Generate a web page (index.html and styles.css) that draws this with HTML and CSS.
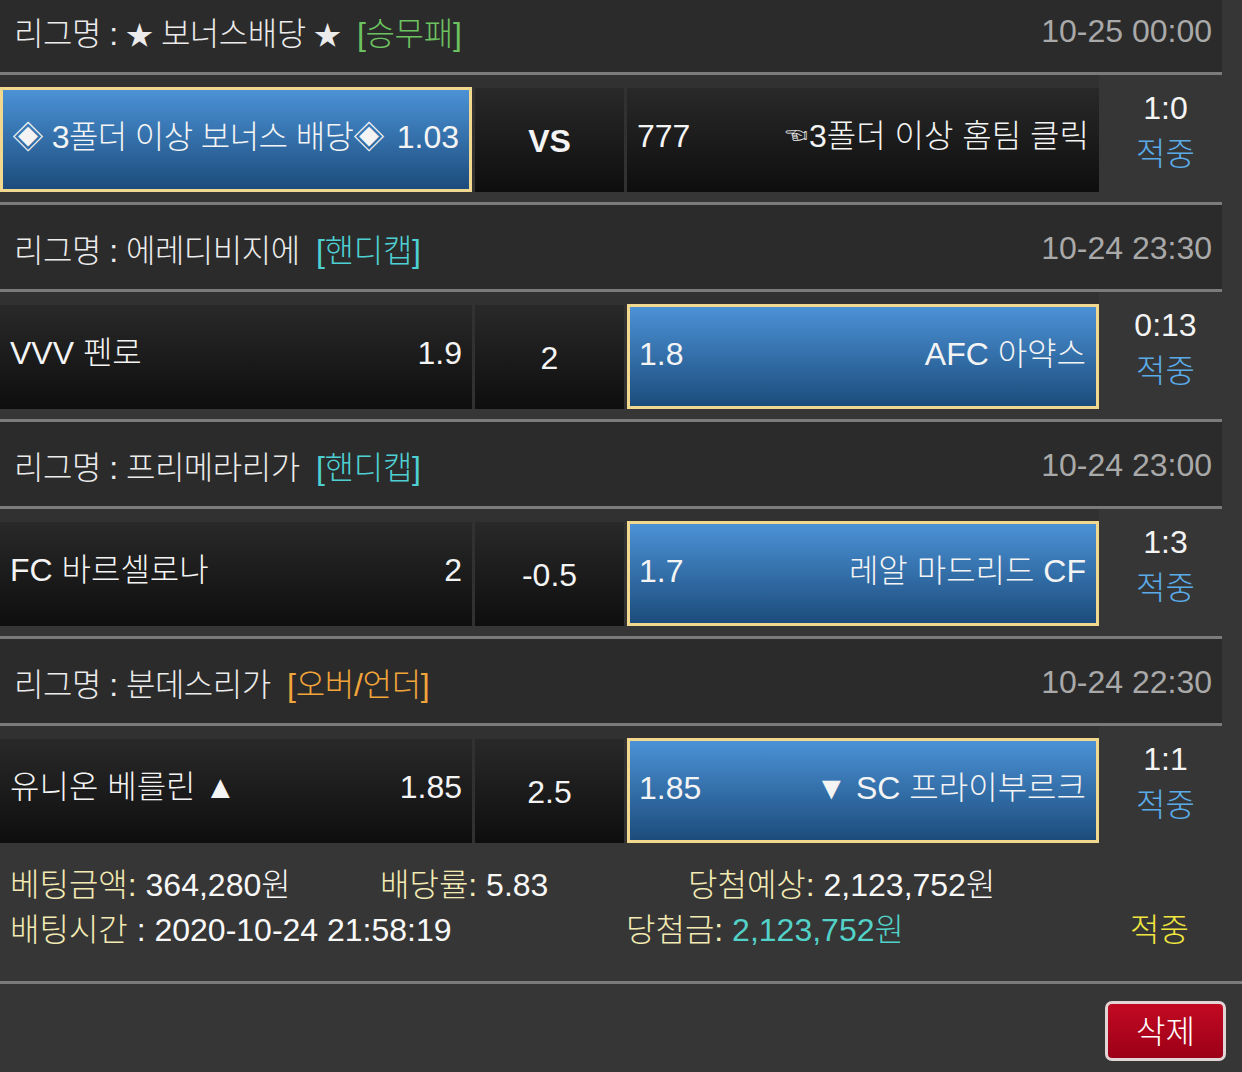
FILE: index.html
```html
<!DOCTYPE html>
<html lang="ko">
<head>
<meta charset="utf-8">
<title>Bet slip</title>
<link rel="stylesheet" href="styles.css">
</head>
<body>
<div class="page">
  <div class="list">
    <section class="game">
      <div class="head">
        <div class="league">리그명 : <span class="star">★</span> 보너스배당 <span class="star">★</span> <span class="tag tag-green">[승무패]</span></div>
        <div class="date">10-25 00:00</div>
      </div>
      <div class="match">
        <div class="cells">
          <div class="cell side selected"><div class="pick"><span class="tight">◈ 3폴더 이상 보너스 배당◈</span><span>1.03</span></div></div>
          <div class="cell mid vs">VS</div>
          <div class="cell side"><div class="pick"><span>777</span><span><span class="hand">☜</span>3폴더 이상 홈팀 클릭</span></div></div>
        </div>
        <div class="score"><div>1:0</div><div class="hit">적중</div></div>
      </div>
    </section>

    <section class="game">
      <div class="head">
        <div class="league">리그명 : 에레디비지에 <span class="tag tag-cyan">[핸디캡]</span></div>
        <div class="date">10-24 23:30</div>
      </div>
      <div class="match">
        <div class="cells">
          <div class="cell side"><div class="pick"><span>VVV 펜로</span><span>1.9</span></div></div>
          <div class="cell mid">2</div>
          <div class="cell side selected"><div class="pick"><span>1.8</span><span>AFC 아약스</span></div></div>
        </div>
        <div class="score"><div>0:13</div><div class="hit">적중</div></div>
      </div>
    </section>

    <section class="game">
      <div class="head">
        <div class="league">리그명 : 프리메라리가 <span class="tag tag-cyan">[핸디캡]</span></div>
        <div class="date">10-24 23:00</div>
      </div>
      <div class="match">
        <div class="cells">
          <div class="cell side"><div class="pick"><span>FC 바르셀로나</span><span>2</span></div></div>
          <div class="cell mid">-0.5</div>
          <div class="cell side selected"><div class="pick"><span>1.7</span><span>레알 마드리드 CF</span></div></div>
        </div>
        <div class="score"><div>1:3</div><div class="hit">적중</div></div>
      </div>
    </section>

    <section class="game">
      <div class="head">
        <div class="league">리그명 : 분데스리가 <span class="tag tag-orange">[오버/언더]</span></div>
        <div class="date">10-24 22:30</div>
      </div>
      <div class="match">
        <div class="cells">
          <div class="cell side"><div class="pick"><span>유니온 베를린 ▲</span><span>1.85</span></div></div>
          <div class="cell mid">2.5</div>
          <div class="cell side selected"><div class="pick"><span>1.85</span><span>▼ SC 프라이부르크</span></div></div>
        </div>
        <div class="score"><div>1:1</div><div class="hit">적중</div></div>
      </div>
    </section>
  </div>

  <div class="summary">
    <div class="line line-1">
      <div><span class="label">베팅금액:</span> 364,280원</div>
      <div><span class="label">배당률:</span> 5.83</div>
      <div><span class="label">당첨예상:</span> 2,123,752원</div>
    </div>
    <div class="line line-2">
      <div><span class="label">배팅시간</span> : 2020-10-24 21:58:19</div>
      <div><span class="label">당첨금:</span> <span class="won">2,123,752원</span></div>
      <div class="result">적중</div>
    </div>
  </div>

  <div class="actions">
    <button class="delete" type="button">삭제</button>
  </div>
</div>
</body>
</html>
```

FILE: styles.css
```css
html, body {
  margin: 0;
  padding: 0;
  background: #363636;
}

body {
  width: 1242px;
  height: 1072px;
  overflow: hidden;
  font-family: "Liberation Sans", "Noto Sans CJK KR", sans-serif;
  font-size: 32px;
  font-weight: 300;
  color: #f2f2f2;
}

.list {
  margin-top: -15px;
}

.game + .game {
  margin-top: 10px;
}

.head {
  width: 1222px;
  box-sizing: border-box;
  height: 90px;
  background: #2b2b2b;
  border-top: 3px solid #7b7b7b;
  border-bottom: 3px solid #7b7b7b;
  display: flex;
  align-items: center;
  justify-content: space-between;
  padding: 2px 10px 0 14px;
  color: #ececec;
}

.league {
  letter-spacing: -0.5px;
}

.star {
  font-size: 27px;
}

.tag {
  margin-left: 8px;
  letter-spacing: -0.3px;
}

.tag-green { color: #6cc160; }
.tag-cyan { color: #4ecfd2; }
.tag-orange { color: #f1a43a; }

.date {
  color: #a9a9a9;
}

.match {
  display: flex;
  height: 117px;
}

.cells {
  display: grid;
  grid-template-columns: 472px 149px 472px;
  column-gap: 3px;
  padding-top: 13px;
  background: #313131;
}

.cell {
  background: linear-gradient(#292929, #0e0e0e);
  display: flex;
  align-items: center;
  box-sizing: border-box;
  color: #f4f4f4;
}

.side {
  padding: 0 10px 8px 10px;
}

.pick {
  flex: 1;
  display: flex;
  align-items: baseline;
  justify-content: space-between;
  line-height: 40px;
}

.selected {
  background: linear-gradient(#4b92d6, #1c4c7c);
  border: 3px solid #f2d78e;
  margin-top: -1px;
  padding: 0 10px 6px 9px;
}

.tight {
  letter-spacing: -0.6px;
}

.mid {
  justify-content: center;
  padding-top: 2px;
}

.vs {
  font-weight: bold;
}

.hand {
  font-size: 26px;
  font-family: "DejaVu Sans", sans-serif;
  vertical-align: 2px;
}

.score {
  flex: 1;
  padding: 10px 10px 0 0;
  text-align: center;
  line-height: 46px;
  color: #f4f4f4;
}

.hit {
  color: #5aabe7;
}

.summary {
  padding: 20px 0 28px 10px;
  border-bottom: 3px solid #7b7b7b;
  line-height: 45px;
  color: #f8f8f8;
}

.line {
  display: grid;
}

.line-1 {
  grid-template-columns: 370px 308px auto;
}

.line-2 {
  grid-template-columns: 616px 504px auto;
}

.label {
  color: #f3ebb3;
}

.won {
  color: #52d2c9;
}

.result {
  color: #f1e63f;
}

.actions {
  display: flex;
  justify-content: flex-end;
  padding: 17px 16px 0 0;
}

.delete {
  width: 121px;
  height: 60px;
  border: 3px solid #e2d5d6;
  border-radius: 7px;
  background: linear-gradient(#c20a22, #9c0018);
  color: #ffffff;
  font-family: "Liberation Sans", "Noto Sans CJK KR", sans-serif;
  font-size: 32px;
  font-weight: 300;
  padding: 0 0 4px 0;
}
```
